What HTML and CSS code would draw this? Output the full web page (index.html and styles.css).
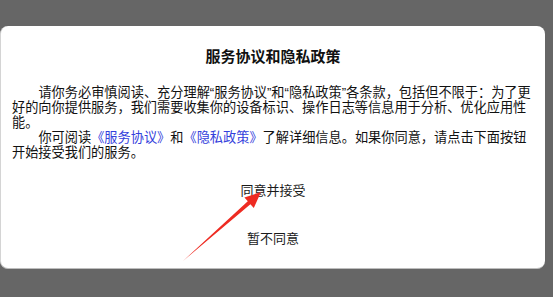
FILE: index.html
```html
<!DOCTYPE html>
<html lang="zh-CN">
<head>
    <meta charset="UTF-8">
    <meta name="viewport" content="width=device-width, initial-scale=1.0">
    <title>服务协议和隐私政策</title>
    <link rel="stylesheet" href="styles.css">
</head>
<body>
    <div class="dialog">
        <h2 class="dialog-title">服务协议和隐私政策</h2>
        <p class="dialog-text">请你务必审慎阅读、充分理解“服务协议”和“隐私政策”各条款，包括但不限于：为了更好的向你提供服务，我们需要收集你的设备标识、操作日志等信息用于分析、优化应用性能。</p>
        <p class="dialog-text">你可阅读<a href="#">《服务协议》</a>和<a href="#">《隐私政策》</a>了解详细信息。如果你同意，请点击下面按钮开始接受我们的服务。</p>
        <div class="dialog-actions">
            <button class="dialog-btn">同意并接受</button>
            <button class="dialog-btn">暂不同意</button>
        </div>
    </div>

    <!-- annotation arrow -->
    <svg class="arrow" width="553" height="297" viewBox="0 0 553 297">
        <polygon points="183,261 247.8,201.2 244.4,197.5 261,192 253.8,207.9 250.4,204.2" fill="#ee2b22"/>
    </svg>
</body>
</html>
```

FILE: styles.css
```css
body {
    margin: 0;
    padding-top: 26px;
    background-color: #666666;
    font-family: "Liberation Sans", "Noto Sans CJK SC", sans-serif;
    color: #111;
    height: 271px;
    position: relative;
    overflow: hidden;
}
.dialog {
    width: 522px;
    height: 221px;
    background-color: white;
    border-radius: 8px;
    border-left: 1px solid #d4d4d4;
    border-bottom: 1px solid #bdbdbd;
    padding: 21px 11px 0 11px;
}
.dialog-title {
    margin: 0 0 18px 0;
    font-size: 15px;
    line-height: 20px;
    font-weight: bold;
    text-align: center;
}
.dialog-text {
    margin: 0;
    font-size: 13.2px;
    line-height: 15px;
    text-indent: 2em;
}
.dialog-text a {
    color: #3340dc;
    text-decoration: none;
}
.dialog-actions {
    display: flex;
    flex-direction: column;
    margin-top: 5px;
}
.dialog-btn {
    height: 48px;
    border: none;
    background: none;
    font-family: inherit;
    font-size: 13px;
    color: #1a1a1a;
    padding: 0;
}
.arrow {
    position: absolute;
    left: 0;
    top: 0;
}
```
